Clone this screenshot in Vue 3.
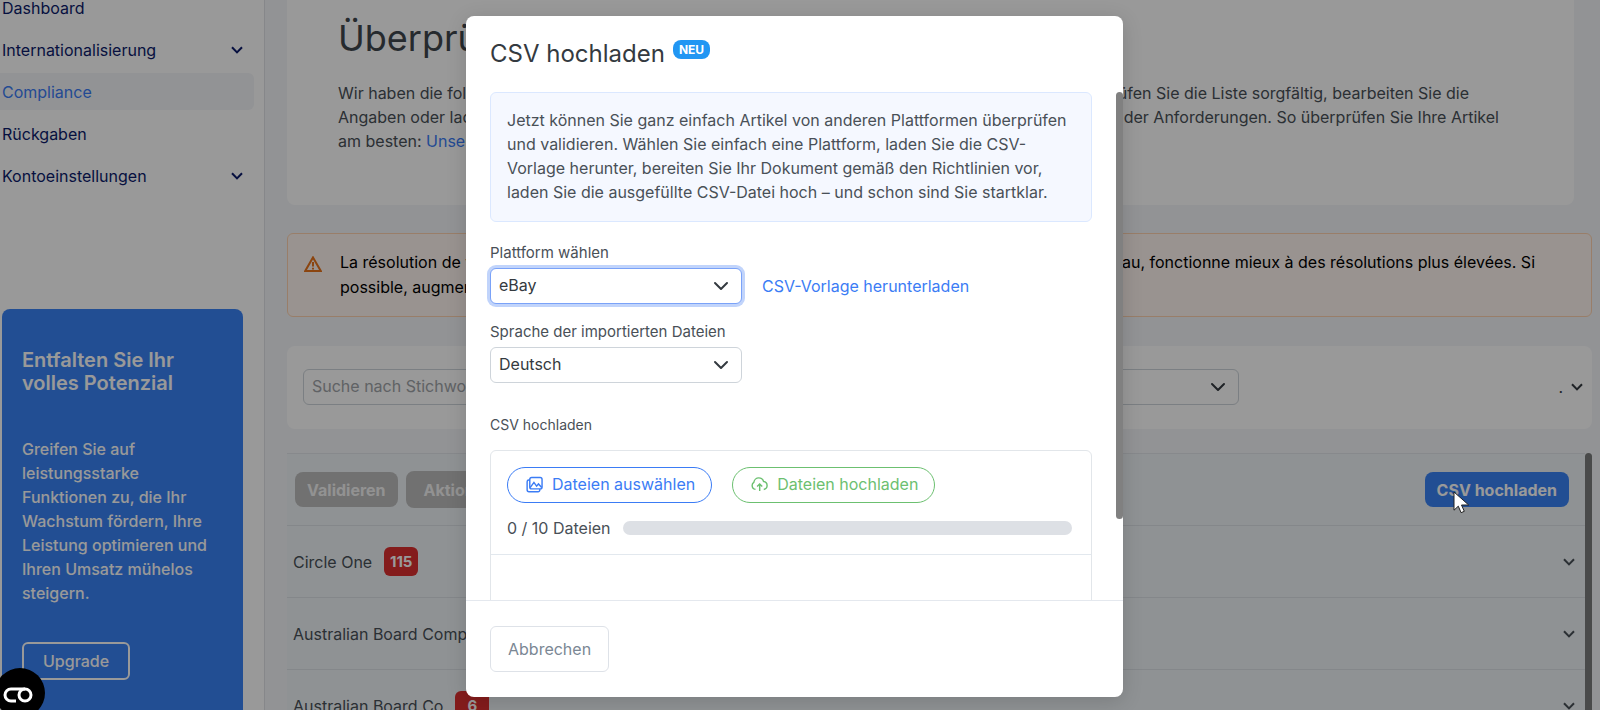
<script setup>
import { ref } from 'vue'

const navItems = [
    { label: 'Dashboard' },
    { label: 'Internationalisierung', expandable: true },
    { label: 'Compliance', active: true },
    { label: 'Rückgaben' },
    { label: 'Kontoeinstellungen', expandable: true }
]

const groups = [
    { name: 'Circle One', count: 115 },
    { name: 'Australian Board Company', count: 12 },
    { name: 'Australian Board Co', count: 6 }
]

const search = ref('')
const filter = ref('')
const platform = ref('ebay')
const language = ref('de')
const fileCount = ref(0)
const maxFiles = 10
</script>

<template>
    <div class="page">
        <aside class="sidebar">
            <nav class="nav">
                <a v-for="item in navItems" :key="item.label" href="#" class="nav-item" :class="{ active: item.active }">
                    {{ item.label }}
                    <svg v-if="item.expandable" class="chevron" viewBox="0 0 12 8" aria-hidden="true">
                        <path d="M1 1.2 6 6.4 11 1.2" />
                    </svg>
                </a>
            </nav>
            <section class="promo">
                <h2>Entfalten Sie Ihr volles Potenzial</h2>
                <p>Greifen Sie auf leistungsstarke Funktionen zu, die Ihr Wachstum fördern, Ihre Leistung optimieren und
                    Ihren Umsatz mühelos steigern.</p>
                <button type="button" class="promo-button">Upgrade</button>
            </section>
        </aside>

        <main class="main">
            <section class="intro">
                <h1>Überprüfen</h1>
                <p>
                    <span class="line short"><span>Wir haben die folgenden Artikel</span><span>Bitte prüfen Sie die Liste sorgfältig, bearbeiten Sie die</span></span>
                    <span class="line"><span>Angaben oder laden Sie</span><span>Nachweise der Anforderungen. So überprüfen Sie Ihre Artikel</span></span>
                    <span class="line"><span>am besten: <a href="#">Unsere Anleitung</a></span></span>
                </p>
            </section>

            <div class="alert" role="alert">
                <svg class="alert-icon" viewBox="0 0 18 16" aria-hidden="true">
                    <path d="M9 1.4 16.8 15H1.2Z" />
                    <path d="M9 6v4.6M9 11.8v1.6" />
                </svg>
                <p>
                    <span class="line"><span>La résolution de votre écran</span><span>niveau, fonctionne mieux à des résolutions plus élevées. Si</span></span>
                    <span class="line"><span>possible, augmentez-la.</span></span>
                </p>
            </div>

            <section class="filters">
                <input v-model="search" type="text" class="field" placeholder="Suche nach Stichwort" aria-label="Suche nach Stichwort">
                <select v-model="filter" class="field" aria-label="Filter">
                    <option value=""></option>
                </select>
                <button type="button" class="more" aria-label="Mehr">
                    .
                    <svg class="chevron" viewBox="0 0 12 8" aria-hidden="true">
                        <path d="M1 1.2 6 6.4 11 1.2" />
                    </svg>
                </button>
            </section>

            <section class="results">
                <div class="results-list">
                    <div class="toolbar">
                        <button type="button" class="action" disabled>Validieren</button>
                        <button type="button" class="action wide" disabled>Aktionen</button>
                        <button type="button" class="action primary">CSV hochladen</button>
                    </div>
                    <div v-for="group in groups" :key="group.name" class="group">
                        <span>{{ group.name }}</span>
                        <span class="count">{{ group.count }}</span>
                        <svg class="chevron" viewBox="0 0 12 8" aria-hidden="true">
                            <path d="M1 1.2 6 6.4 11 1.2" />
                        </svg>
                    </div>
                </div>
                <div class="results-scroll"></div>
            </section>
        </main>

        <div class="overlay">
            <div class="modal" role="dialog" aria-modal="true" aria-labelledby="modal-title">
                <header class="modal-header">
                    <h2 id="modal-title">CSV hochladen</h2>
                    <span class="new">NEU</span>
                </header>

                <div class="modal-body">
                    <div class="modal-content">
                        <p class="info">Jetzt können Sie ganz einfach Artikel von anderen Plattformen überprüfen und validieren.
                            Wählen Sie einfach eine Plattform, laden Sie die CSV-Vorlage herunter, bereiten Sie Ihr Dokument
                            gemäß den Richtlinien vor, laden Sie die ausgefüllte CSV-Datei hoch – und schon sind Sie
                            startklar.</p>

                        <label class="label" for="platform">Plattform wählen</label>
                        <div class="row">
                            <select id="platform" v-model="platform" class="field focused">
                                <option value="ebay">eBay</option>
                            </select>
                            <a href="#">CSV-Vorlage herunterladen</a>
                        </div>

                        <label class="label second" for="language">Sprache der importierten Dateien</label>
                        <div class="row">
                            <select id="language" v-model="language" class="field">
                                <option value="de">Deutsch</option>
                            </select>
                        </div>

                        <p id="upload-label" class="label upload-label">CSV hochladen</p>
                        <div class="upload" role="group" aria-labelledby="upload-label">
                            <div class="upload-head">
                                <div class="upload-buttons">
                                    <button type="button" class="pill">
                                        <svg viewBox="0 0 18 18" aria-hidden="true">
                                            <rect x="4" y="1.6" width="13" height="12" rx="2" />
                                            <path d="M4 4.2H3a1.8 1.8 0 0 0-1.8 1.8v8.6a2 2 0 0 0 2 2h9.6a1.8 1.8 0 0 0 1.8-1.8v-1M4.4 12.4l4-5.6 2.8 4 2-2.4 3.4 3.8" />
                                        </svg>
                                        Dateien auswählen
                                    </button>
                                    <button type="button" class="pill green">
                                        <svg viewBox="0 0 18 18" aria-hidden="true">
                                            <path d="M4.8 14.2A4.4 4.4 0 0 1 1.2 10C1.2 8.6 1.9 7.5 3 6.8 3.300 4 5.600 2 8.200 2c2.400 0 4.400 1.500 5.100 3.800a4.300 4.300 0 0 1 .2 8.500" />
                                            <path d="M9.200 16V8.600M6.500 11.200 9.200 8.500l2.700 2.700" />
                                        </svg>
                                        Dateien hochladen
                                    </button>
                                </div>
                                <div class="progress-row">
                                    <span>{{ fileCount }} / {{ maxFiles }} Dateien</span>
                                    <div class="progress">
                                        <div class="progress-fill" :style="{ width: `${(fileCount / maxFiles) * 100}%` }"></div>
                                    </div>
                                </div>
                            </div>
                            <div class="upload-files"></div>
                        </div>
                    </div>
                    <div class="modal-scroll"></div>
                </div>

                <footer class="modal-footer">
                    <button type="button" class="cancel">Abbrechen</button>
                </footer>
            </div>
        </div>

        <button type="button" class="consent" aria-label="Cookie-Einstellungen">
            <svg viewBox="0 0 30 16" aria-hidden="true">
                <path d="M13 14H8a6 6 0 0 1 0-12h14" />
                <circle cx="22" cy="8" r="6" />
            </svg>
        </button>

        <svg class="cursor" viewBox="0 0 17 24" aria-hidden="true">
            <path d="M1 1v18.200l4.300-4 2.800 6.500 3.200-1.400-2.800-6.300h7.200Z" />
        </svg>
    </div>
</template>

<style>
body {
    margin: 0;
    overflow: hidden;
}
</style>

<style scoped>
.page {
    position: relative;
    display: flex;
    height: 100vh;
    overflow: hidden;
    background: #f4f6f9;
    color: #495057;
    font-family: Inter, sans-serif;
    font-size: 16px;
    line-height: 24px;
}

.page *,
.page *::before {
    box-sizing: border-box;
}

h1,
h2,
p {
    margin: 0;
    font-weight: 400;
}

a {
    color: #3b7cf5;
    text-decoration: none;
}

button,
input,
select {
    font: inherit;
    color: inherit;
    margin: 0;
}

.chevron {
    width: 12px;
    height: 8px;
    fill: none;
    stroke: currentColor;
    stroke-width: 2;
}

.sidebar {
    display: flex;
    flex-direction: column;
    flex: 0 0 265px;
    background: #fff;
    border-right: 1px solid #dfe2e6;
}

.nav {
    display: flex;
    flex-direction: column;
    gap: 5px;
    margin: -11px 10px 0 0;
}

.nav-item {
    display: flex;
    align-items: center;
    justify-content: space-between;
    height: 37px;
    padding: 0 11px 0 2px;
    border-radius: 0 6px 6px 0;
    color: #0c1b6b;
}

.nav-item.active {
    background: #f3f5f8;
    color: #3b7cf5;
}

.promo {
    flex: 1 0 auto;
    margin: 115px 21px 0 2px;
    padding: 40px 20px;
    border-radius: 8px 8px 0 0;
    background: #3a83f5;
    color: #fff;
}

.promo h2 {
    font-size: 20px;
    font-weight: 600;
    line-height: 23px;
}

.promo p {
    margin: 42px 0 37px;
    font-weight: 500;
}

.promo-button {
    height: 38px;
    padding: 0 19px;
    border: 2px solid #fff;
    border-radius: 6px;
    background: transparent;
    font-weight: 500;
}

.main {
    flex: 1;
    min-width: 0;
    padding: 0 8px 0 22px;
}

.intro {
    margin-right: 18px;
    padding: 15px 75px 52px 51px;
    border-radius: 0 0 8px 8px;
    background: #fff;
}

.intro h1 {
    margin-bottom: 20px;
    color: #40464d;
    font-size: 36px;
    line-height: 46px;
}

.line {
    display: flex;
    justify-content: space-between;
    white-space: nowrap;
}

.line.short {
    padding-right: 30px;
}

.alert {
    display: flex;
    gap: 18px;
    margin-top: 28px;
    padding: 16px 56px 16px 16px;
    border: 1px solid #ffd3b0;
    border-radius: 6px;
    background: #fff6f0;
    color: #000;
    line-height: 25px;
}

.alert-icon {
    width: 18px;
    height: 16px;
    margin-top: 6px;
    fill: none;
    stroke: #e8731c;
    stroke-width: 2;
}

.alert p {
    flex: 1;
}

.filters {
    display: flex;
    align-items: center;
    gap: 16px;
    margin-top: 29px;
    padding: 23px 9px 24px 16px;
    border-radius: 8px;
    background: #fff;
}

.field {
    flex: 0 1 460px;
    height: 36px;
    padding: 0 8px 2px;
    border: 1px solid #ced4da;
    border-radius: 6px;
    background: #fff;
}

select.field {
    appearance: none;
    padding-right: 40px;
    background: #fff url("data:image/svg+xml,%3Csvg xmlns='http://www.w3.org/2000/svg' viewBox='0 0 16 16'%3E%3Cpath fill='none' stroke='%23343a40' stroke-linecap='round' stroke-linejoin='round' stroke-width='2' d='m2 5 6 6 6-6'/%3E%3C/svg%3E") no-repeat right 12px center / 16px 16px;
}

.filters .field::placeholder {
    color: #a0a4a8;
    opacity: 1;
}

.more {
    display: flex;
    align-items: center;
    gap: 8px;
    margin-left: auto;
    padding: 0;
    border: 0;
    background: transparent;
    color: #343a40;
}

.results {
    display: flex;
    margin-top: 24px;
}

.results-list {
    flex: 1;
    border-top: 1px solid #e2e5e9;
    background: #eff4f7;
}

.toolbar {
    display: flex;
    align-items: center;
    gap: 8px;
    height: 71px;
    padding: 0 16px 0 8px;
}

.action {
    height: 35px;
    padding: 0 12px;
    border: 0;
    border-radius: 8px;
    background: #bcbcbc;
    color: #f4f4f4;
    font-weight: 700;
}

.action.wide {
    height: 37px;
    padding: 0 18px;
}

.action.primary {
    margin-left: auto;
    background: #3a83f5;
    color: #fff;
}

.group {
    display: flex;
    align-items: center;
    height: 72px;
    padding: 0 10px 0 6px;
    border-top: 1px solid #dde1e6;
}

.group .chevron {
    margin-left: auto;
}

.count {
    min-width: 34px;
    margin-left: 12px;
    padding: 3px 4px;
    border-radius: 6px;
    background: #dc2f2f;
    color: #fff;
    font-size: 15px;
    font-weight: 700;
    line-height: 23px;
    text-align: center;
}

.results-scroll {
    width: 7px;
    border-radius: 4px;
    background: #7a7c7c;
}

.overlay {
    position: absolute;
    inset: 0;
    display: flex;
    justify-content: center;
    padding: 16px 11px 13px 0;
    background: rgba(0, 0, 0, 0.4);
}

.modal {
    display: flex;
    flex-direction: column;
    width: 657px;
    border-radius: 8px;
    background: #fff;
    box-shadow: 0 4px 20px rgba(0, 0, 0, 0.15);
    color: #495057;
    overflow: hidden;
}

.modal-header {
    display: flex;
    align-items: flex-start;
    gap: 8px;
    padding: 22px 24px;
}

.modal-header h2 {
    color: #343a40;
    font-size: 24px;
    line-height: 32px;
}

.new {
    margin-top: 2px;
    padding: 0 6px;
    border-radius: 8px;
    background: #2196f3;
    color: #fff;
    font-size: 12px;
    font-weight: 700;
    line-height: 19px;
}

.modal-body {
    display: flex;
    flex: 1;
    min-height: 0;
    overflow: hidden;
}

.modal-content {
    flex: 1;
    padding: 0 24px;
}

.modal-scroll {
    width: 7px;
    height: 84%;
    border-radius: 4px;
    background: #808080;
}

.info {
    padding: 15px 16px 17px;
    border: 1px solid #dbe8ff;
    border-radius: 6px;
    background: #f5f8ff;
}

.label {
    display: block;
    margin-top: 21px;
    font-size: 15px;
    line-height: 20px;
}

.label.second {
    margin-top: 18px;
}

.label.upload-label {
    margin-top: 32px;
    font-size: 14px;
}

.row {
    display: flex;
    align-items: center;
    gap: 20px;
    margin-top: 5px;
}

.row .field {
    flex: 0 0 252px;
    color: #343a40;
}

.field.focused {
    border-color: #7aa2f8;
    box-shadow: 0 0 0 3px #c1d4fb;
}

.upload {
    margin-top: 15px;
    border: 1px solid #e2e6ea;
    border-radius: 6px;
}

.upload-head {
    padding: 16px 19px 14px 16px;
    border-bottom: 1px solid #e2e8ee;
}

.upload-buttons {
    display: flex;
    gap: 20px;
}

.pill {
    display: flex;
    align-items: center;
    gap: 9px;
    height: 36px;
    padding: 0 16px 2px 18px;
    border: 1px solid #3b7cf5;
    border-radius: 18px;
    background: #fff;
    color: #3b7cf5;
}

.pill.green {
    border-color: #6cc070;
    color: #6cc070;
}

.pill svg {
    width: 17px;
    height: 17px;
    fill: none;
    stroke: currentColor;
    stroke-width: 1.5;
}

.progress-row {
    display: flex;
    align-items: center;
    gap: 12px;
    margin-top: 13px;
}

.progress {
    flex: 1;
    height: 14px;
    border-radius: 7px;
    background: #dde0e5;
    overflow: hidden;
}

.progress-fill {
    height: 100%;
    background: #3b7cf5;
}

.upload-files {
    height: 140px;
}

.modal-footer {
    padding: 25px 24px;
    border-top: 1px solid #e4e8ee;
}

.cancel {
    height: 46px;
    padding: 0 17px;
    border: 1px solid #dee2e8;
    border-radius: 6px;
    background: #fff;
    color: #7b8794;
}

.consent {
    position: absolute;
    left: -5px;
    bottom: -8px;
    display: flex;
    align-items: center;
    justify-content: center;
    width: 50px;
    height: 50px;
    padding: 4px 4px 0 0;
    border: 0;
    border-radius: 50%;
    background: #000;
}

.consent svg {
    width: 30px;
    height: 16px;
    fill: none;
    stroke: #fff;
    stroke-width: 3;
}

.cursor {
    position: absolute;
    top: 491px;
    right: 130px;
    width: 17px;
    height: 24px;
    fill: #fff;
    stroke: #222;
    stroke-width: 1;
}
</style>
